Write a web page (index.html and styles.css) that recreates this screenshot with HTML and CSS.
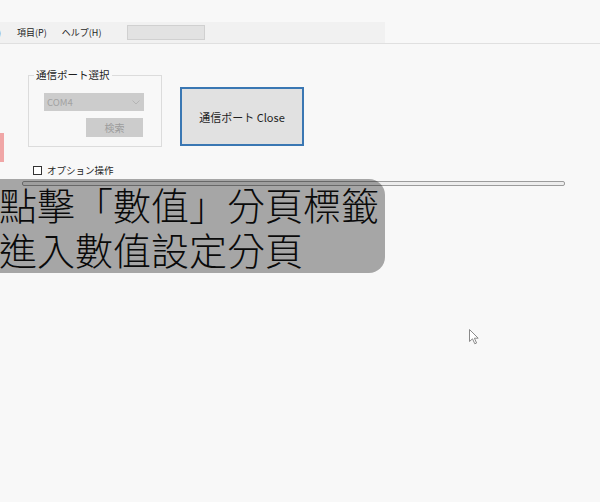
FILE: index.html
```html
<!DOCTYPE html>
<html lang="ja">
<head>
    <meta charset="UTF-8">
    <title>通信設定</title>
    <link rel="stylesheet" href="styles.css">
</head>
<body>
    <div class="menubar">
        <div class="menu-strip">
            <span class="menu-item menu-cut">)</span>
            <span class="menu-item">項目(P)</span>
            <span class="menu-item">ヘルプ(H)</span>
            <span class="menu-box"></span>
        </div>
    </div>

    <div class="panel">
        <div class="top-row">
            <fieldset class="port-group">
                <legend>通信ポート選択</legend>
                <div class="combo">
                    <span>COM4</span>
                    <svg class="chevron" width="8" height="5" viewBox="0 0 8 5">
                        <path d="M0.5 0.5 L4 4 L7.5 0.5" fill="none" stroke="#b4b4b4" stroke-width="1"/>
                    </svg>
                </div>
                <div class="search-btn">検索</div>
            </fieldset>
            <button class="close-btn">通信ポート Close</button>
        </div>

        <label class="option">
            <span class="check"></span>
            オプション操作
        </label>

        <div class="bar"></div>
    </div>

    <div class="side-mark"></div>

    <div class="subtitle" lang="zh-Hant">
        <div>點擊「數值」分頁標籤</div>
        <div>進入數值設定分頁</div>
    </div>

    <svg class="cursor" width="12" height="17" viewBox="0 0 12 17">
        <path d="M0.5 0.5 L0.5 12.5 L3.5 9.8 L5.8 14.8 L7.6 14 L5.4 9.2 L9.2 9.2 Z" fill="#fff" stroke="#8a8a8a" stroke-width="1"/>
    </svg>
</body>
</html>
```

FILE: styles.css
```css
* {
    box-sizing: border-box;
}

body {
    margin: 0;
    width: 600px;
    height: 502px;
    overflow: hidden;
    position: relative;
    background: #f8f8f8;
    font-family: 'Noto Sans CJK JP', 'Noto Sans', sans-serif;
    color: #1e1e1e;
}

.menubar {
    margin-top: 22px;
    border-bottom: 1px solid #e0e0e0;
}

.menu-strip {
    width: 385px;
    height: 21px;
    background: #f1f1f1;
    display: flex;
    align-items: center;
}

.menu-item {
    font-size: 9px;
    line-height: 12px;
    margin-right: 15px;
}

.menu-cut {
    margin-left: -2px;
    margin-right: 16px;
    color: #666;
}

.menu-box {
    width: 78px;
    height: 15px;
    margin-left: 11px;
    background: #e2e2e2;
    border: 1px solid #d0d0d0;
}

.panel {
    padding-top: 24px;
}

.top-row {
    display: flex;
    align-items: flex-start;
    padding-left: 28px;
    gap: 18px;
}

.port-group {
    margin: 0;
    width: 134px;
    padding: 0 0 9px 5px;
    border: 1px solid #dcdcdc;
}

.port-group legend {
    font-size: 10.5px;
    line-height: 14px;
    padding: 0 2px;
    color: #1e1e1e;
}

.combo {
    margin: 11px 0 0 10px;
    width: 100px;
    height: 18px;
    background: #cccccc;
    display: flex;
    align-items: center;
    justify-content: space-between;
    padding: 0 4px 0 3px;
    font-size: 9.5px;
    color: #a2a2a2;
}

.search-btn {
    margin: 7px 0 0 52px;
    width: 57px;
    height: 19px;
    background: #cccccc;
    font-size: 10px;
    color: #9c9c9c;
    display: flex;
    align-items: center;
    justify-content: center;
}

.close-btn {
    margin-top: 19px;
    width: 124px;
    height: 59px;
    background: #e1e1e1;
    border: 2px solid #3a77b3;
    font-family: inherit;
    font-size: 11px;
    color: #1e1e1e;
    padding: 0;
}

.option {
    margin: 16px 0 0 33px;
    height: 14px;
    display: flex;
    align-items: center;
    gap: 5px;
    font-size: 9.5px;
}

.check {
    width: 9px;
    height: 9px;
    border: 1px solid #333;
    background: #fff;
}

.bar {
    margin: 4px 0 0 22px;
    width: 543px;
    height: 5px;
    border: 1px solid #9c9c9c;
    border-radius: 2px;
    background: #eeeeee;
}

.side-mark {
    position: absolute;
    left: 0;
    top: 133px;
    width: 4px;
    height: 29px;
    background: #f0a6a6;
}

.subtitle {
    position: absolute;
    left: -20px;
    top: 179px;
    width: 405px;
    height: 94px;
    padding: 2px 0 0 19px;
    border-radius: 16px;
    background: rgba(0, 0, 0, 0.33);
    font-family: 'Noto Sans CJK TC', 'Noto Sans CJK JP', sans-serif;
    font-weight: 300;
    font-size: 38px;
    line-height: 45px;
    color: #0a0a0a;
    white-space: nowrap;
}

.cursor {
    position: absolute;
    left: 469px;
    top: 329px;
}
```
